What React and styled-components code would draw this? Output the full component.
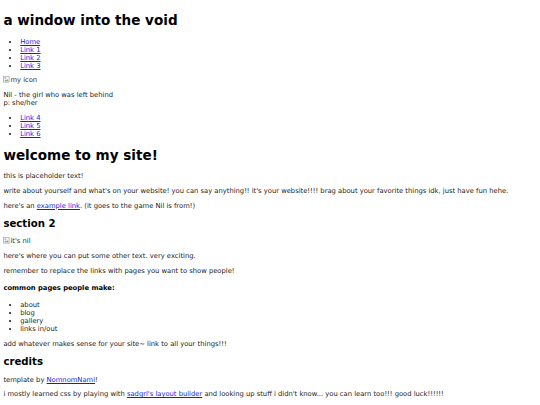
import React from "react";
import styled, { createGlobalStyle } from "styled-components";

const GlobalStyle = createGlobalStyle`
  body {
    margin: 3.4px;
    font-family: "DejaVu Sans", Verdana, sans-serif;
    font-size: 6.78px;
    color: #1a1a1a;
    background: #fff;
  }
`;

const Title = styled.h1`
  font-size: 2em;
  font-weight: bold;
  margin: 0.67em 0;
  color: #000;
`;

const Heading = styled.h2`
  font-size: 1.5em;
  font-weight: bold;
  margin: 0.83em 0;
  color: #000;
`;

const SubHeading = styled.h4`
  font-size: 1em;
  font-weight: bold;
  margin: 1.33em 0;
  color: #000;
`;

const List = styled.ul`
  margin: 1em 0;
  padding-left: 16.8px;
  list-style: disc;
`;

const Para = styled.p`
  margin: 1em 0;
`;

const Link = styled.a`
  color: #1a1ae6;
  text-decoration: underline;
`;

const Broken = styled.span`
  color: #2a2a2a;

  svg {
    width: 7px;
    height: 7px;
    vertical-align: -1px;
  }
`;

const BrokenIcon = () => (
  <svg viewBox="0 0 16 16">
    <rect x="1" y="1" width="13" height="13" fill="#eef3f7" stroke="#9aa6b2" strokeWidth="1.5" />
    <path d="M3 12 L6 8 L8 10 L10 7 L13 12 Z" fill="#7ab36a" />
    <circle cx="5" cy="5" r="1.5" fill="#d66" />
  </svg>
);

const BrokenImage = ({ alt }) => (
  <Broken>
    <BrokenIcon />
    {alt}
  </Broken>
);

const Aside = styled.aside`
  display: block;
`;

const Main = styled.main`
  display: block;
`;

const navTop = ["Home", "Link 1", "Link 2", "Link 3"];
const navBottom = ["Link 4", "Link 5", "Link 6"];
const pages = ["about", "blog", "gallery", "links in/out"];

export default function App() {
  return (
    <>
      <GlobalStyle />
      <header>
        <Title>a window into the void</Title>
      </header>
      <nav>
        <List>
          {navTop.map((l) => (
            <li key={l}>
              <Link href="#">{l}</Link>
            </li>
          ))}
        </List>
      </nav>
      <Aside>
        <BrokenImage alt="my icon" />
        <Para>
          Nil - the girl who was left behind
          <br />
          p: she/her
        </Para>
        <List>
          {navBottom.map((l) => (
            <li key={l}>
              <Link href="#">{l}</Link>
            </li>
          ))}
        </List>
      </Aside>
      <Main>
        <Title>welcome to my site!</Title>
        <Para>this is placeholder text!</Para>
        <Para>
          write about yourself and what's on your website! you can say anything!! it's your
          website!!!! brag about your favorite things idk, just have fun hehe.
        </Para>
        <Para>
          here's an <Link href="#">example link</Link>. (it goes to the game Nil is from!)
        </Para>
        <Heading>section 2</Heading>
        <BrokenImage alt="it's nil" />
        <Para>here's where you can put some other text. very exciting.</Para>
        <Para>remember to replace the links with pages you want to show people!</Para>
        <SubHeading>common pages people make:</SubHeading>
        <List>
          {pages.map((p) => (
            <li key={p}>{p}</li>
          ))}
        </List>
        <Para>add whatever makes sense for your site~ link to all your things!!!</Para>
        <Heading>credits</Heading>
        <Para>
          template by <Link href="#">NomnomNami</Link>!
        </Para>
        <Para>
          i mostly learned css by playing with <Link href="#">sadgrl's layout builder</Link> and
          looking up stuff i didn't know... you can learn too!!! good luck!!!!!!
        </Para>
      </Main>
    </>
  );
}
